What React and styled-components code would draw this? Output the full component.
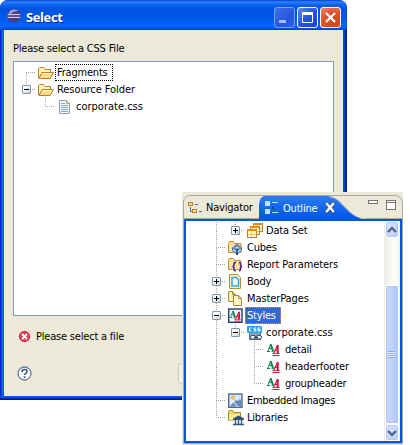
import React from "react";
import styled, { createGlobalStyle, css } from "styled-components";

const Global = createGlobalStyle`
  * { box-sizing: border-box; }
  body { margin: 0; background: #fff; overflow: hidden; font: 11px/17px "DejaVu Sans Condensed", "DejaVu Sans", sans-serif; font-stretch: condensed; color: #000; }
  svg { display: block; flex: none; }
`;
const Screen = styled.main`position: relative; width: 410px; height: 445px;`;
const Dialog = styled.section`
  width: 347px; height: 400px; display: flex; flex-direction: column;
  border-radius: 8px 8px 0 0; padding: 0 4px 4px;
  background: linear-gradient(90deg, #0019cf 0, #0831d9 1px, #166aee 2px, #0855dd 4px, #0855dd 343px, #0045d8 344px, #001590 347px);
  overflow: hidden;
`;
const TitleBar = styled.header`
  height: 30px; flex: none; display: flex; align-items: center; margin: 0 -4px; padding: 2px 6px 0 7px; gap: 5px;
  background: linear-gradient(#0840c4 0, #2d80fa 2px, #0a60ee 5px, #0054e0 9px, #0058ea 18px, #0066ff 26px, #005be8 28px, #003cc0 30px);
`;
const Title = styled.h1`
  margin: 1px auto 0 0; color: #fff; font: bold 13px/20px "Open Sans", sans-serif; letter-spacing: -0.4px; text-shadow: 1px 1px 0 #0c2a80;
`;
const Buttons = styled.div`display: flex; gap: 2px; margin-top: 2px;`;
const WinButton = styled.span`
  width: 21px; height: 21px; border: 1px solid #fff; border-radius: 3px; display: grid; place-items: center;
  ${(p) => p.$kind === "close" && css`background: radial-gradient(circle at 70% 80%, #d8431c, #e0532c 55%, #eb8b70);`}
  ${(p) => p.$kind === "max" && css`background: linear-gradient(135deg, #5e8df5, #1f58e0 50%, #1247cf);`}
  ${(p) => p.$kind === "min" && css`border-color: #7b9ff0; background: linear-gradient(135deg, #4070e8, #2457dc 60%, #3164e0);`}
`;
const DialogBody = styled.div`
  flex: 1; background: #ece9d8; padding: 10px 10px 0 9px; display: flex; flex-direction: column;
`;
const FileList = styled.div`
  width: 321px; height: 255px; margin-top: 4px; border: 1px solid #7f9db9; background: #fff; padding: 2px 0 0 3px; flex: none;
`;
const Text = styled.span`white-space: pre; letter-spacing: ${(p) => p.$ls ?? -0.2}px;`;
const Message = styled.div`display: flex; align-items: center; gap: 5px; margin: 12px 0 0 5px; height: 16px;`;
const Footer = styled.footer`display: flex; align-items: center; justify-content: space-between; margin: 19px 0 0 4px;`;
const PushButton = styled.span`width: 155px; height: 21px; border: 1px solid #c9c7ba; border-radius: 3px; background: #f5f4ea;`;
const BottomEdge = styled.div`
  height: 4px; flex: none; margin: 0 -4px -4px; background: linear-gradient(#0855ee 0 1px, #0541d8 2px, #001590 3px);
`;
const Row = styled.div`height: 17px; display: flex; align-items: center;`;
const dotsV = "repeating-linear-gradient(180deg,#aca899 0 1px,transparent 1px 2px)";
const dotsH = "repeating-linear-gradient(90deg,#aca899 0 1px,transparent 1px 2px)";
const Guide = styled.span`
  width: 19px; height: 17px; flex: none; display: grid; place-items: center;
  background-repeat: no-repeat;
  background-image: ${dotsV}, ${dotsV}, ${dotsH};
  background-position: 9px 0, 9px 9px, 9px 8px;
  background-size:
    ${(p) => (/[tv]/.test(p.$k) ? "1px 9px" : "0 0")},
    ${(p) => (/[bv]/.test(p.$k) ? "1px 8px" : "0 0")},
    ${(p) => (/h/.test(p.$k) ? "10px 1px" : "0 0")};
`;
const Box = styled.span`
  width: 9px; height: 9px; border: 1px solid #7898b5; border-radius: 1px;
  background:
    linear-gradient(#000, #000) 1px 3px / 5px 1px no-repeat,
    linear-gradient(#000, #000) 3px 1px / 1px ${(p) => (p.$open ? 0 : 5)}px no-repeat,
    linear-gradient(135deg, #fff 30%, #d2cdbf);
`;
const Slot = styled.span`width: 16px; height: 16px; margin: 0 2px; flex: none;`;
const Name = styled(Text)`
  height: 17px; line-height: 15px; padding: 0 1px; margin-left: -1px; border: 1px solid transparent;
  ${(p) => p.$focus && css`border: 1px dotted #000; padding-right: 4px;`}
  ${(p) => p.$selected && css`background: #316ac5; color: #fff; border: 1px dotted #cea040; padding-right: 4px;`}
`;

const Outline = styled.section`
  position: absolute; left: 182px; top: 192px; width: 221px; height: 253px;
  background: #ece9d8; padding: 3px 0 1px 1px; display: flex; flex-direction: column;
`;
const Frame = styled.div`
  flex: 1; min-height: 0; border: 1px solid #aca899; border-radius: 7px 8px 0 0; display: flex; flex-direction: column; overflow: hidden;
`;
const Tabs = styled.div`height: 23px; flex: none; display: flex;`;
const NavTab = styled.div`width: 75px; display: flex; align-items: center; gap: 3px; padding: 1px 0 0 3px; border-bottom: 1px solid #aca899;`;
const ActiveTab = styled.div`
  position: relative; width: 113px; height: 23px; flex: none; display: flex; align-items: center; color: #fff; padding: 1px 0 0 6px; gap: 2px;
  background: linear-gradient(#2b7cf6, #0055e5);
  clip-path: path("M-1 23 Q0 22 0 8 Q1 1 5 0 H70 Q77 1 83 8 L91 16 Q98 22.500 107 23 Z");
`;
const TabCurve = styled.svg`position: absolute; left: 0; top: 0;`;
const TabTools = styled.div`flex: 1; padding-top: 4px; border-bottom: 1px solid #aca899; margin-left: -6px;`;
const Pane = styled.div`flex: 1; min-height: 0; border: 2px solid #0055e5; background: #fff; display: flex; justify-content: space-between;`;
const Tree = styled.div`padding-left: 21px; padding-top: 1px;`;
const ScrollBar = styled.div`
  width: 16px; display: flex; flex-direction: column; padding: 0 1px 0 1px; background: linear-gradient(90deg, #eeede5, #fefefb 70%, #f2f1ea);
`;
const ArrowButton = styled.span`
  height: 17px; border: 1px solid #fff; border-radius: 3px; display: grid; place-items: center; box-shadow: inset 0 0 0 1px #b4c8f6;
  background: linear-gradient(135deg, #dce6fe, #b9cdfb);
`;
const Thumb = styled.span`
  height: 139px; margin-top: auto; border: 1px solid #fff; border-radius: 2px; display: grid; place-items: center;
  background: linear-gradient(90deg, #c9d8fc, #bccffb 65%, #acc2f5); box-shadow: inset 0 0 0 1px #b2c6f3;
`;

const Svg = ({ w = 16, h = 16, children }) => (
  <svg width={w} height={h} viewBox={`0 0 ${w} ${h}`} fill="none">{children}</svg>
);
const FolderOpen = () => (
  <Svg>
    <path d="M.5 13V3.500l1-1h4l1.500 2h5.500v3" fill="#fff3b8" stroke="#b87d25" />
    <path d="M1 13.500 4 7.500h11.500l-3.300 6z" fill="#fbdd87" stroke="#b87d25" />
    <path d="M4.700 8.500H14" stroke="#fff8d8" />
  </Svg>
);
const FileIcon = () => (
  <Svg>
    <path d="M2.500 1.500h7l3 3v10h-10z" fill="#f5f9ff" stroke="#8c9bb5" />
    <path d="M9.500 1.500v3h3z" fill="#e8d89c" stroke="#b5a571" />
    <path d="M4 4.500h4M4 6.500h7M4 8.500h7M4 10.500h7M4 12.500h7" stroke="#7da2dc" />
  </Svg>
);
const DataSet = () => (
  <Svg>
    {[[6, 0], [3, 3], [0, 6]].map(([x, y]) => (
      <g key={x}>
        <rect x={x + 0.5} y={y + 0.5} width="9" height="8" fill="#fff6d2" stroke="#b8802c" />
        <path d={`M${x} ${y + 1}h10`} stroke="#e68a18" strokeWidth="2" />
        <path d={`M${x + 1} ${y + 5.5}h8M${x + 4.5} ${y + 3}v5`} stroke="#e8c775" />
      </g>
    ))}
  </Svg>
);
const folderBack = <path d="M.5 12.500v-9l1-2h4l1 2h6.500v9z" fill="#fce29a" stroke="#c08a3a" />;
const Cubes = () => (
  <Svg>
    {folderBack}
    <path d="m9 4.500 4.500 3v3L9 14.500l-4.500-4v-3z" fill="#b6cee9" stroke="#456fa8" />
    <path d="m9 4.500-2 3 2 2.500 2-2.500zM5 8l4 2.500L13 8" stroke="#456fa8" />
    <path d="M9 9v6" stroke="#24508e" strokeWidth="1.800" />
  </Svg>
);
const braces = "M8 5.500H7q-1 0-1 1.500 0 2.500-1.500 2.500Q6 9.500 6 12q0 1.500 1 1.500h1M11 5.500h.500q1 0 1 1.500 0 2.500 1.500 2.500-1.500 0-1.500 2.500 0 1.500-1 1.500H11";
const Params = () => (
  <Svg>
    {folderBack}
    <path d={braces} stroke="#fff4dc" strokeWidth="3" />
    <path d={braces} stroke="#5a2f8c" strokeWidth="1.800" />
  </Svg>
);
const BodyIcon = () => (
  <Svg>
    <path d="M1.500.5h8l3 3v11h-11z" fill="#fff0b8" stroke="#b09040" />
    <path d="M4 3.500h4.500l2 2v6.500H4z" fill="#eef8ff" stroke="#36a5dc" strokeWidth="1.500" />
  </Svg>
);
const Pages = () => (
  <Svg>
    <path d="M.5.5h4l3 3v7h-7z" fill="#fff0b8" stroke="#ad8b36" />
    <path d="M4.500.5v3h3" stroke="#ad8b36" />
    <path d="M5.500 4.500h5l3 3v7h-8z" fill="#fff4c5" stroke="#ad8b36" />
    <path d="M10.500 4.500v3h3" stroke="#ad8b36" />
  </Svg>
);
const Letters = () => (
  <>
    <path d="M2 9 4.500 2.500" stroke="#138050" />
    <path d="M4.500 2 7 9" stroke="#138050" strokeWidth="2" />
    <path d="M3 6.500h3M1 9.500h3M5.500 9.500h2" stroke="#138050" />
    <path d="m7.500 11.500 4-8M8.500 8.500h3M6.500 11.500h2.500M9.500 11.500h4" stroke="#cf1538" strokeWidth="1.200" />
    <path d="M11.700 3v8.500" stroke="#cf1538" strokeWidth="2" />
    <path d="M6.500 13.500h7" stroke="#cf1538" />
  </>
);
const StylesIcon = () => (
  <Svg>
    <rect x=".7" y="1" width="13.300" height="13.300" fill="#f1f6ff" stroke="#203f70" strokeWidth="1.400" />
    <g transform="translate(.8 1.200) scale(.88)"><Letters /></g>
  </Svg>
);
const StyleItem = () => <Svg><Letters /></Svg>;
const CssIcon = () => (
  <Svg>
    <rect x="2.500" y="5.500" width="11" height="9" fill="#8ca2ba" stroke="#60748b" />
    <rect x="0" y="1" width="15" height="7" rx="1" fill="#25a6dc" />
    <path d="M4.500 3h-2v3h2M9 3H7v1.500h2V6H6.500M13 3h-2v1.500h2V6h-2.500" stroke="#fff" />
    <rect x="3.500" y="10.500" width="5" height="3.500" rx="1.700" fill="#fff" stroke="#274566" />
    <rect x="9.500" y="10.500" width="5" height="3.500" rx="1.700" fill="#fff" stroke="#274566" />
    <path d="M7 12.500h4" stroke="#274566" />
  </Svg>
);
const ImageIcon = () => (
  <Svg>
    <rect x=".7" y="1" width="13.300" height="13.300" fill="#d4e6fb" stroke="#4c6380" strokeWidth="1.300" />
    <path d="m2 13 6-6 2 1 2-2 1.500 2v5.500H2z" fill="#668bb5" />
    <path d="m2 10 3-2 5 6" stroke="#fff" />
    <circle cx="5" cy="4.500" r="1.500" fill="#ffe778" stroke="#e2a32c" />
  </Svg>
);
const Library = () => (
  <Svg>
    <path d="M.5 10.500V1.500l1-1h3L6 2.500h6.500v8z" fill="#f1d96c" stroke="#a5851c" />
    <path d="M1 4.500h11l-1 6H1z" fill="#ffec9b" />
    <path d="m5 8.500 5.500-3L16 8.500V10H5z" fill="#31547d" />
    <path d="M6 10h9v5H6z" fill="#fff" />
    <path d="M7.500 10v4M10.500 10v4M13.500 10v4M5 14.500h11" stroke="#31547d" strokeWidth="1.400" />
  </Svg>
);

const TreeRow = ({ guides, open, icon: Icon, text, ls, focus, selected }) => (
  <Row>
    {guides.map((g, i) => (
      <Guide key={i} $k={g}>
        {open !== undefined && i === guides.length - 1 && <Box $open={open} />}
      </Guide>
    ))}
    <Slot><Icon /></Slot>
    <Name $ls={ls} $focus={focus} $selected={selected}>{text}</Name>
  </Row>
);

const outline = [
  { guides: ["v", "th"], open: false, icon: DataSet, text: "Data Set" },
  { guides: ["vh"], icon: Cubes, text: "Cubes" },
  { guides: ["vh"], icon: Params, text: "Report Parameters", ls: -0.08 },
  { guides: ["vh"], open: false, icon: BodyIcon, text: "Body" },
  { guides: ["vh"], open: false, icon: Pages, text: "MasterPages", ls: -0.1 },
  { guides: ["vh"], open: true, icon: StylesIcon, text: "Styles", selected: true },
  { guides: ["v", "th"], open: true, icon: CssIcon, text: "corporate.css", ls: -0.02 },
  { guides: ["v", "", "vh"], icon: StyleItem, text: "detail" },
  { guides: ["v", "", "vh"], icon: StyleItem, text: "headerfooter", ls: -0.03 },
  { guides: ["v", "", "th"], icon: StyleItem, text: "groupheader" },
  { guides: ["vh"], icon: ImageIcon, text: "Embedded Images", ls: -0.3 },
  { guides: ["th"], icon: Library, text: "Libraries" },
];

export default function App() {
  return (
    <Screen>
      <Global />
      <Dialog>
        <TitleBar>
          <Svg w={14} h={14}>
            <circle cx="7" cy="7" r="6.700" fill="#493f84" />
            <path d="M1.500 4.500Q3 .5 7 .5t4 1.500Q6 2 4 5z" fill="#a79bd0" />
            <path d="M.7 5.500h12.600M.7 8.500h12.600" stroke="#d0cdea" />
            <path d="M.5 7h13" stroke="#6f66a8" />
          </Svg>
          <Title>Select</Title>
          <Buttons>
            <WinButton $kind="min"><Svg w={19} h={19}><path d="M4 13.500h7" stroke="#a5bdf6" strokeWidth="3" /></Svg></WinButton>
            <WinButton $kind="max"><Svg w={19} h={19}><path d="M4.500 5v9.500h10V5M4 5.500h11" stroke="#fff" /><path d="M4 5.500h11" stroke="#fff" strokeWidth="3" /></Svg></WinButton>
            <WinButton $kind="close"><Svg w={19} h={19}><path d="m5 5 9 9M14 5l-9 9" stroke="#fff" strokeWidth="2.200" /></Svg></WinButton>
          </Buttons>
        </TitleBar>
        <DialogBody>
          <Text>Please select a CSS File</Text>
          <FileList>
            <TreeRow guides={["bh"]} icon={FolderOpen} text="Fragments" focus />
            <TreeRow guides={["th"]} open icon={FolderOpen} text="Resource Folder" ls={-0.07} />
            <TreeRow guides={["", "th"]} icon={FileIcon} text="corporate.css" ls={0} />
          </FileList>
          <Message>
            <Svg w={13} h={13}>
              <circle cx="6.500" cy="6.500" r="6" fill="#e0444e" stroke="#fff" />
              <circle cx="6.500" cy="6.500" r="5.200" stroke="#c9303c" />
              <path d="m4 4 5 5M9 4 4 9" stroke="#fff" strokeWidth="1.800" />
            </Svg>
            <Text>Please select a file</Text>
          </Message>
          <Footer>
            <Svg w={15} h={15}>
              <circle cx="7.500" cy="7.500" r="6.500" fill="#fff" stroke="#657a9e" strokeWidth="1.300" />
              <path d="M5 6q0-2.500 2.500-2.500T10 5.500q0 1.200-1.300 1.900-1.200.6-1.200 1.600M7.500 10.300v1.700" stroke="#35537f" strokeWidth="1.600" />
            </Svg>
            <PushButton />
          </Footer>
        </DialogBody>
        <BottomEdge />
      </Dialog>
      <Outline>
        <Frame>
          <Tabs>
            <NavTab>
              <Svg>
                <rect x="1.500" y="2.500" width="4" height="3" fill="#ffe69b" stroke="#c3762e" />
                <rect x="5.500" y="9.500" width="4" height="3" fill="#ffe69b" stroke="#c3762e" />
                <path d="M3.500 7v4.500H5M8 4.500h3M12 11.500h3" stroke="#3a6ca8" />
              </Svg>
              <Text>Navigator</Text>
            </NavTab>
            <ActiveTab>
              <TabCurve width="113" height="23" fill="none">
                <path d="M70 .5Q77 1 83 8l8 8q7 6.500 16 7" stroke="#a9b4c4" strokeWidth="1.600" />
              </TabCurve>
              <Svg>
                <rect x="0" y="1" width="5" height="5" fill="#b9e6ff" />
                <rect x="0" y="9" width="5" height="5" fill="#b9e6ff" />
                <path d="M7 2.500h6M7 12.500h6" stroke="#b9e6ff" />
                <rect x="7" y="7" width="2" height="2" fill="#173d70" />
              </Svg>
              <Text>Outline</Text>
              <Svg w={20} h={14}>
                <path d="m8 3 6 7M14 3l-6 7" stroke="#37547d" strokeWidth="4" strokeLinecap="square" />
                <path d="m8 3 6 7M14 3l-6 7" stroke="#fff" strokeWidth="2.400" strokeLinecap="square" />
              </Svg>
            </ActiveTab>
            <TabTools>
              <Svg w={31} h={14}>
                <rect x="2.500" y=".5" width="9" height="3" fill="#fff" stroke="#77756b" />
                <rect x="20.500" y=".5" width="9" height="9" fill="#fff" stroke="#77756b" />
                <path d="M20 2.500h10" stroke="#77756b" />
              </Svg>
            </TabTools>
          </Tabs>
          <Pane>
            <Tree>{outline.map((r, i) => <TreeRow key={i} {...r} />)}</Tree>
            <ScrollBar>
              <ArrowButton><Svg w={10} h={8}><path d="m1 6 4-4 4 4" stroke="#4d6185" strokeWidth="2.200" /></Svg></ArrowButton>
              <Thumb><Svg w={8} h={8}><path d="M0 .5h7M0 2.500h7M0 4.500h7M0 6.500h7" stroke="#8cabef" /><path d="M0 1.500h7M0 3.500h7M0 5.500h7" stroke="#eef4ff" /></Svg></Thumb>
              <ArrowButton><Svg w={10} h={8}><path d="m1 2 4 4 4-4" stroke="#4d6185" strokeWidth="2.200" /></Svg></ArrowButton>
            </ScrollBar>
          </Pane>
        </Frame>
      </Outline>
    </Screen>
  );
}
